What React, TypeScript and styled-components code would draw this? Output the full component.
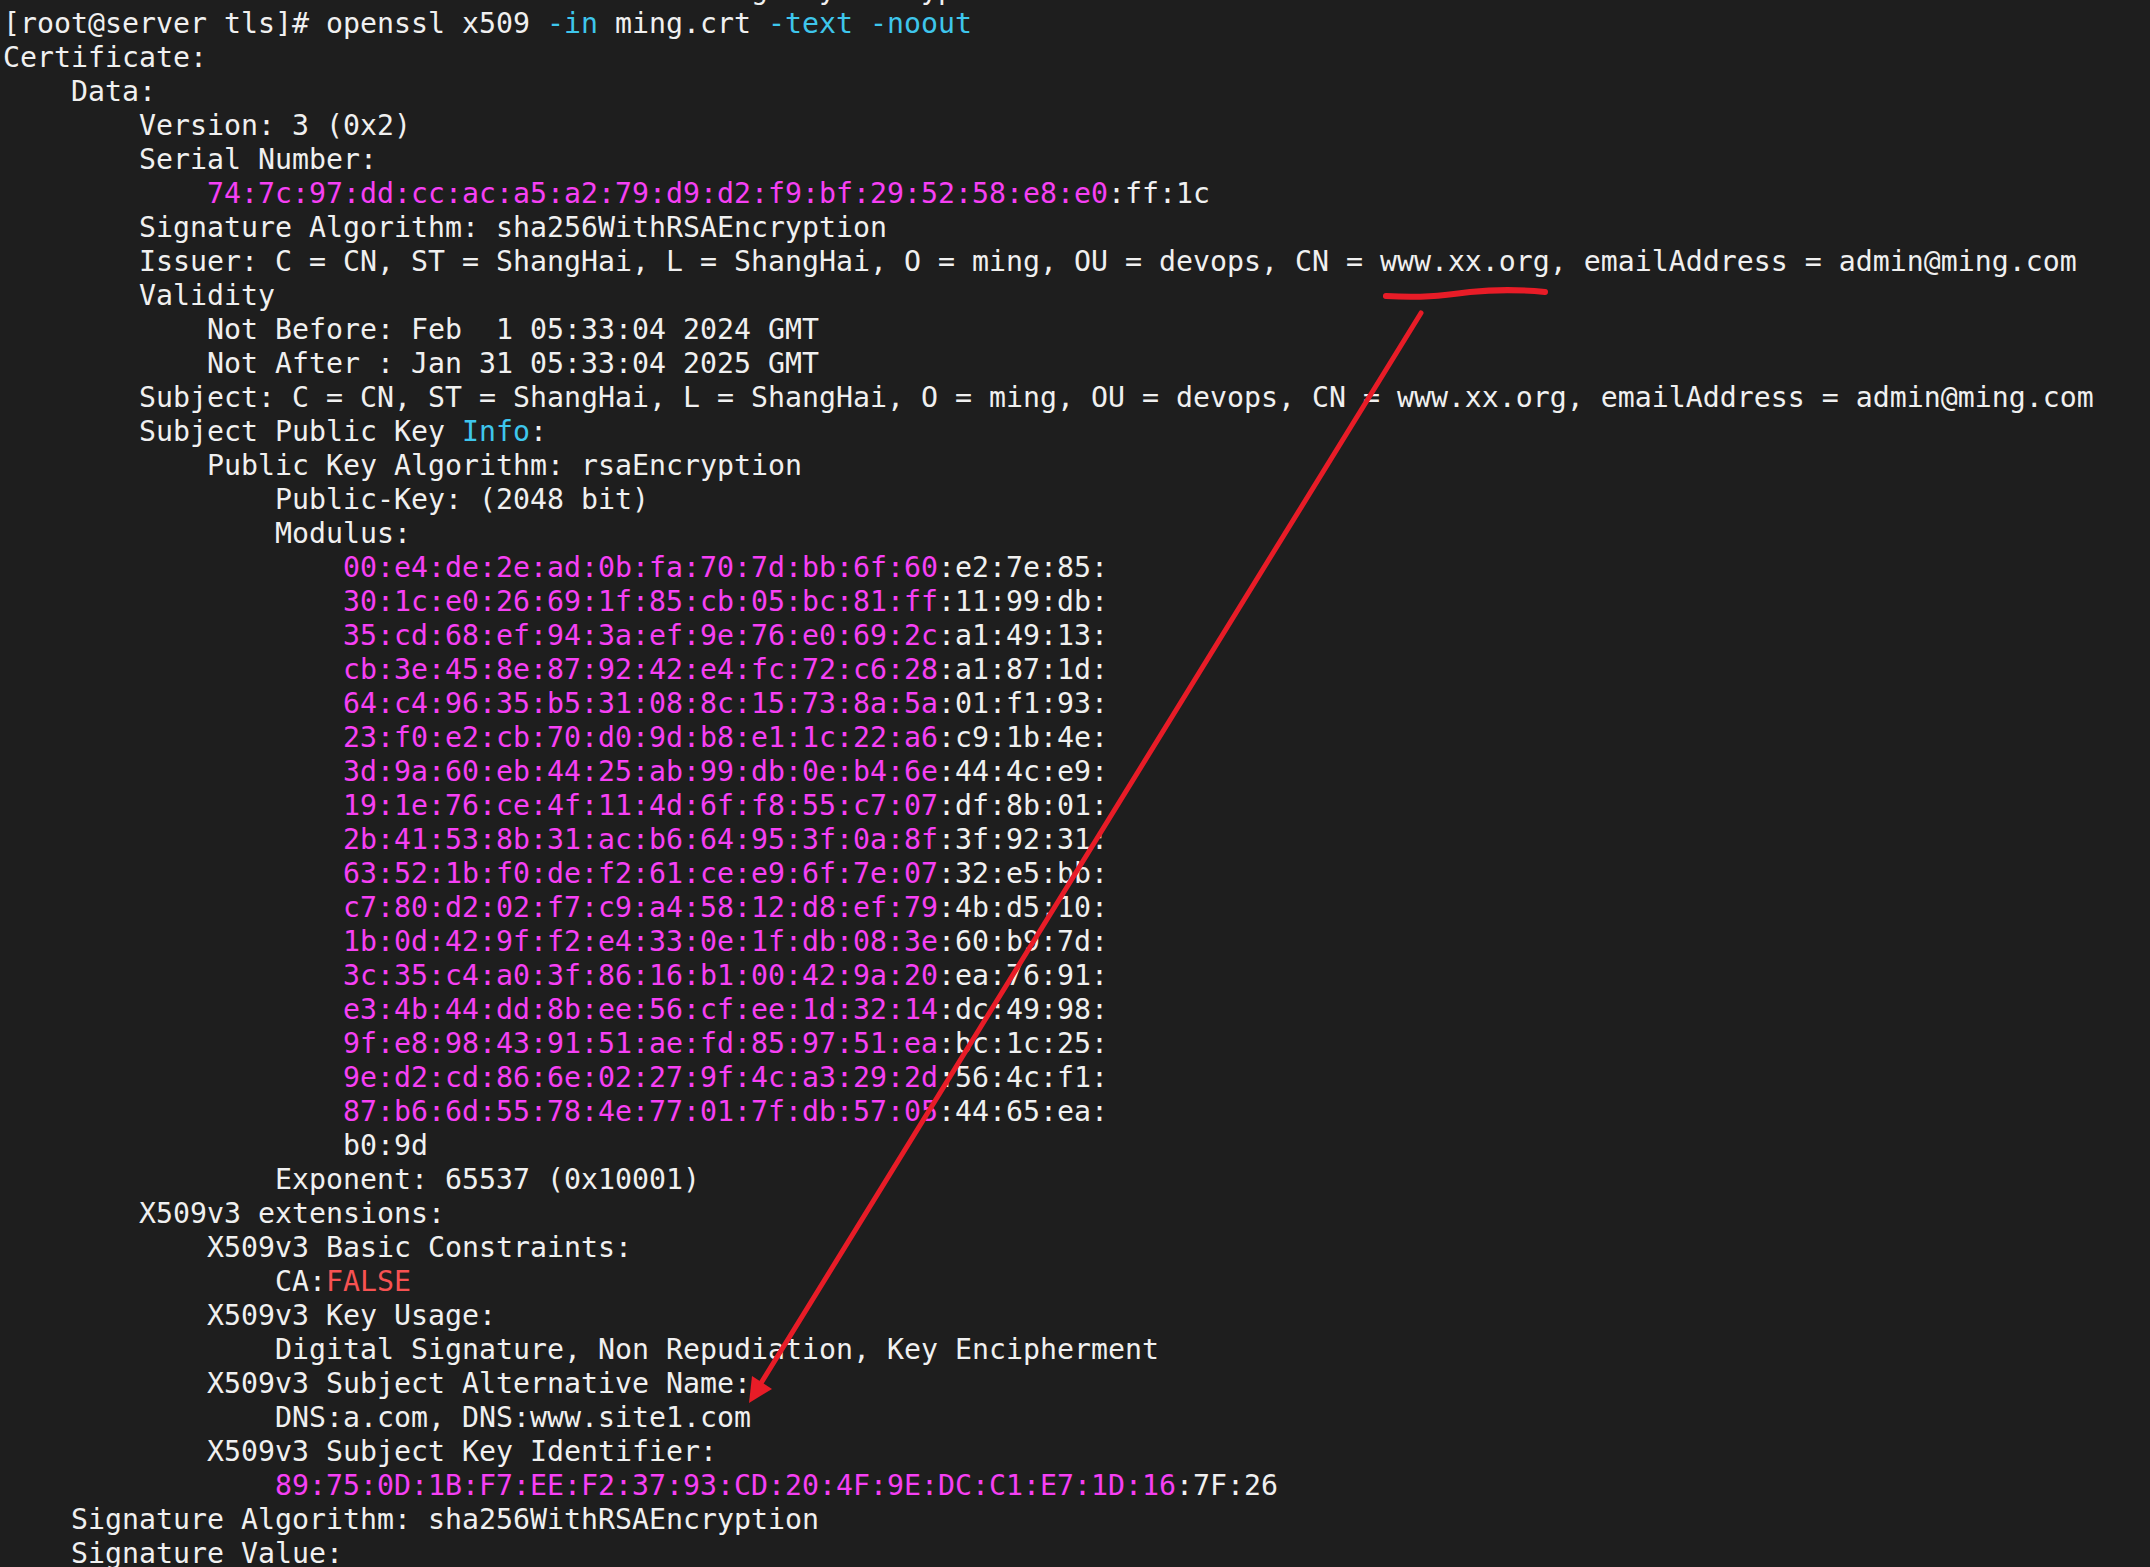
import React from "react";
import styled, { createGlobalStyle } from "styled-components";

const GlobalStyle = createGlobalStyle`
  html, body {
    margin: 0;
    padding: 0;
    background: #1e1e1e;
    overflow: hidden;
  }
  #root {
    width: 2150px;
    height: 1567px;
  }
`;

const Screen = styled.div`
  position: relative;
  width: 2150px;
  height: 1567px;
  overflow: hidden;
  background: #1e1e1e;
`;

const Terminal = styled.div`
  display: flex;
  flex-direction: column;
  margin-top: -27.5px;
  padding-left: 3px;
  font-family: "DejaVu Sans Mono", "Liberation Mono", monospace;
  font-size: 28.24px;
  color: #f0f0f0;
`;

const Line = styled.div`
  height: 34px;
  line-height: 34px;
  white-space: pre;
`;

type Tone = "plain" | "mag" | "cyan" | "red";

const Seg = styled.span<{ $tone: Tone }>`
  color: ${(p) =>
    p.$tone === "mag"
      ? "#f640f4"
      : p.$tone === "cyan"
      ? "#3ec6ec"
      : p.$tone === "red"
      ? "#f75252"
      : "#f0f0f0"};
`;

const Overlay = styled.svg`
  position: absolute;
  left: 0;
  top: 0;
  width: 2150px;
  height: 1567px;
  pointer-events: none;
`;

type Part = [string, Tone];
type Row = Part[];

const p = (t: string): Part => [t, "plain"];
const m = (t: string): Part => [t, "mag"];
const c = (t: string): Part => [t, "cyan"];
const r = (t: string): Part => [t, "red"];

const ind = (n: number) => " ".repeat(n);

// hex line: first `magCount` bytes magenta (with their inner colons), rest plain
const hexRow = (indent: number, hex: string, magCount: number): Row => {
  const bytes = hex.split(":");
  const trailing = hex.endsWith(":");
  const list = trailing ? bytes.slice(0, -1) : bytes;
  const magPart = list.slice(0, magCount).join(":");
  const rest = list.slice(magCount);
  const plainPart = (rest.length ? ":" + rest.join(":") : "") + (trailing ? ":" : "");
  return [p(ind(indent)), m(magPart), p(plainPart)];
};

const modulus = [
  "00:e4:de:2e:ad:0b:fa:70:7d:bb:6f:60:e2:7e:85:",
  "30:1c:e0:26:69:1f:85:cb:05:bc:81:ff:11:99:db:",
  "35:cd:68:ef:94:3a:ef:9e:76:e0:69:2c:a1:49:13:",
  "cb:3e:45:8e:87:92:42:e4:fc:72:c6:28:a1:87:1d:",
  "64:c4:96:35:b5:31:08:8c:15:73:8a:5a:01:f1:93:",
  "23:f0:e2:cb:70:d0:9d:b8:e1:1c:22:a6:c9:1b:4e:",
  "3d:9a:60:eb:44:25:ab:99:db:0e:b4:6e:44:4c:e9:",
  "19:1e:76:ce:4f:11:4d:6f:f8:55:c7:07:df:8b:01:",
  "2b:41:53:8b:31:ac:b6:64:95:3f:0a:8f:3f:92:31:",
  "63:52:1b:f0:de:f2:61:ce:e9:6f:7e:07:32:e5:bb:",
  "c7:80:d2:02:f7:c9:a4:58:12:d8:ef:79:4b:d5:10:",
  "1b:0d:42:9f:f2:e4:33:0e:1f:db:08:3e:60:b9:7d:",
  "3c:35:c4:a0:3f:86:16:b1:00:42:9a:20:ea:76:91:",
  "e3:4b:44:dd:8b:ee:56:cf:ee:1d:32:14:dc:49:98:",
  "9f:e8:98:43:91:51:ae:fd:85:97:51:ea:bc:1c:25:",
  "9e:d2:cd:86:6e:02:27:9f:4c:a3:29:2d:56:4c:f1:",
  "87:b6:6d:55:78:4e:77:01:7f:db:57:05:44:65:ea:",
];

const dn =
  "C = CN, ST = ShangHai, L = ShangHai, O = ming, OU = devops, CN = www.xx.org, emailAddress = admin@ming.com";

const rows: Row[] = [
  [p(ind(44) + "g   y     yp")],
  [
    p("[root@server tls]# openssl x509 "),
    c("-in"),
    p(" ming.crt "),
    c("-text"),
    p(" "),
    c("-noout"),
  ],
  [p("Certificate:")],
  [p(ind(4) + "Data:")],
  [p(ind(8) + "Version: 3 (0x2)")],
  [p(ind(8) + "Serial Number:")],
  hexRow(12, "74:7c:97:dd:cc:ac:a5:a2:79:d9:d2:f9:bf:29:52:58:e8:e0:ff:1c", 18),
  [p(ind(8) + "Signature Algorithm: sha256WithRSAEncryption")],
  [p(ind(8) + "Issuer: " + dn)],
  [p(ind(8) + "Validity")],
  [p(ind(12) + "Not Before: Feb  1 05:33:04 2024 GMT")],
  [p(ind(12) + "Not After : Jan 31 05:33:04 2025 GMT")],
  [p(ind(8) + "Subject: " + dn)],
  [p(ind(8) + "Subject Public Key "), c("Info"), p(":")],
  [p(ind(12) + "Public Key Algorithm: rsaEncryption")],
  [p(ind(16) + "Public-Key: (2048 bit)")],
  [p(ind(16) + "Modulus:")],
  ...modulus.map((h) => hexRow(20, h, 12)),
  [p(ind(20) + "b0:9d")],
  [p(ind(16) + "Exponent: 65537 (0x10001)")],
  [p(ind(8) + "X509v3 extensions:")],
  [p(ind(12) + "X509v3 Basic Constraints:")],
  [p(ind(16) + "CA:"), r("FALSE")],
  [p(ind(12) + "X509v3 Key Usage:")],
  [p(ind(16) + "Digital Signature, Non Repudiation, Key Encipherment")],
  [p(ind(12) + "X509v3 Subject Alternative Name:")],
  [p(ind(16) + "DNS:a.com, DNS:www.site1.com")],
  [p(ind(12) + "X509v3 Subject Key Identifier:")],
  hexRow(16, "89:75:0D:1B:F7:EE:F2:37:93:CD:20:4F:9E:DC:C1:E7:1D:16:7F:26", 18),
  [p(ind(4) + "Signature Algorithm: sha256WithRSAEncryption")],
  [p(ind(4) + "Signature Value:")],
];

const Annotation: React.FC = () => (
  <Overlay viewBox="0 0 2150 1567">
    <path
      d="M1386 296 C1420 298 1440 296 1470 292 C1500 289 1525 290 1545 292"
      fill="none"
      stroke="#e81c27"
      strokeWidth={6}
      strokeLinecap="round"
    />
    <path
      d="M1421 313 L758 1388"
      fill="none"
      stroke="#e81c27"
      strokeWidth={5}
      strokeLinecap="round"
    />
    <polygon points="749,1403 752,1376 772,1389" fill="#e81c27" />
  </Overlay>
);

export default function App() {
  return (
    <Screen>
      <GlobalStyle />
      <Terminal>
        {rows.map((row, i) => (
          <Line key={i}>
            {row.map(([text, tone], j) => (
              <Seg key={j} $tone={tone}>
                {text}
              </Seg>
            ))}
          </Line>
        ))}
      </Terminal>
      <Annotation />
    </Screen>
  );
}
